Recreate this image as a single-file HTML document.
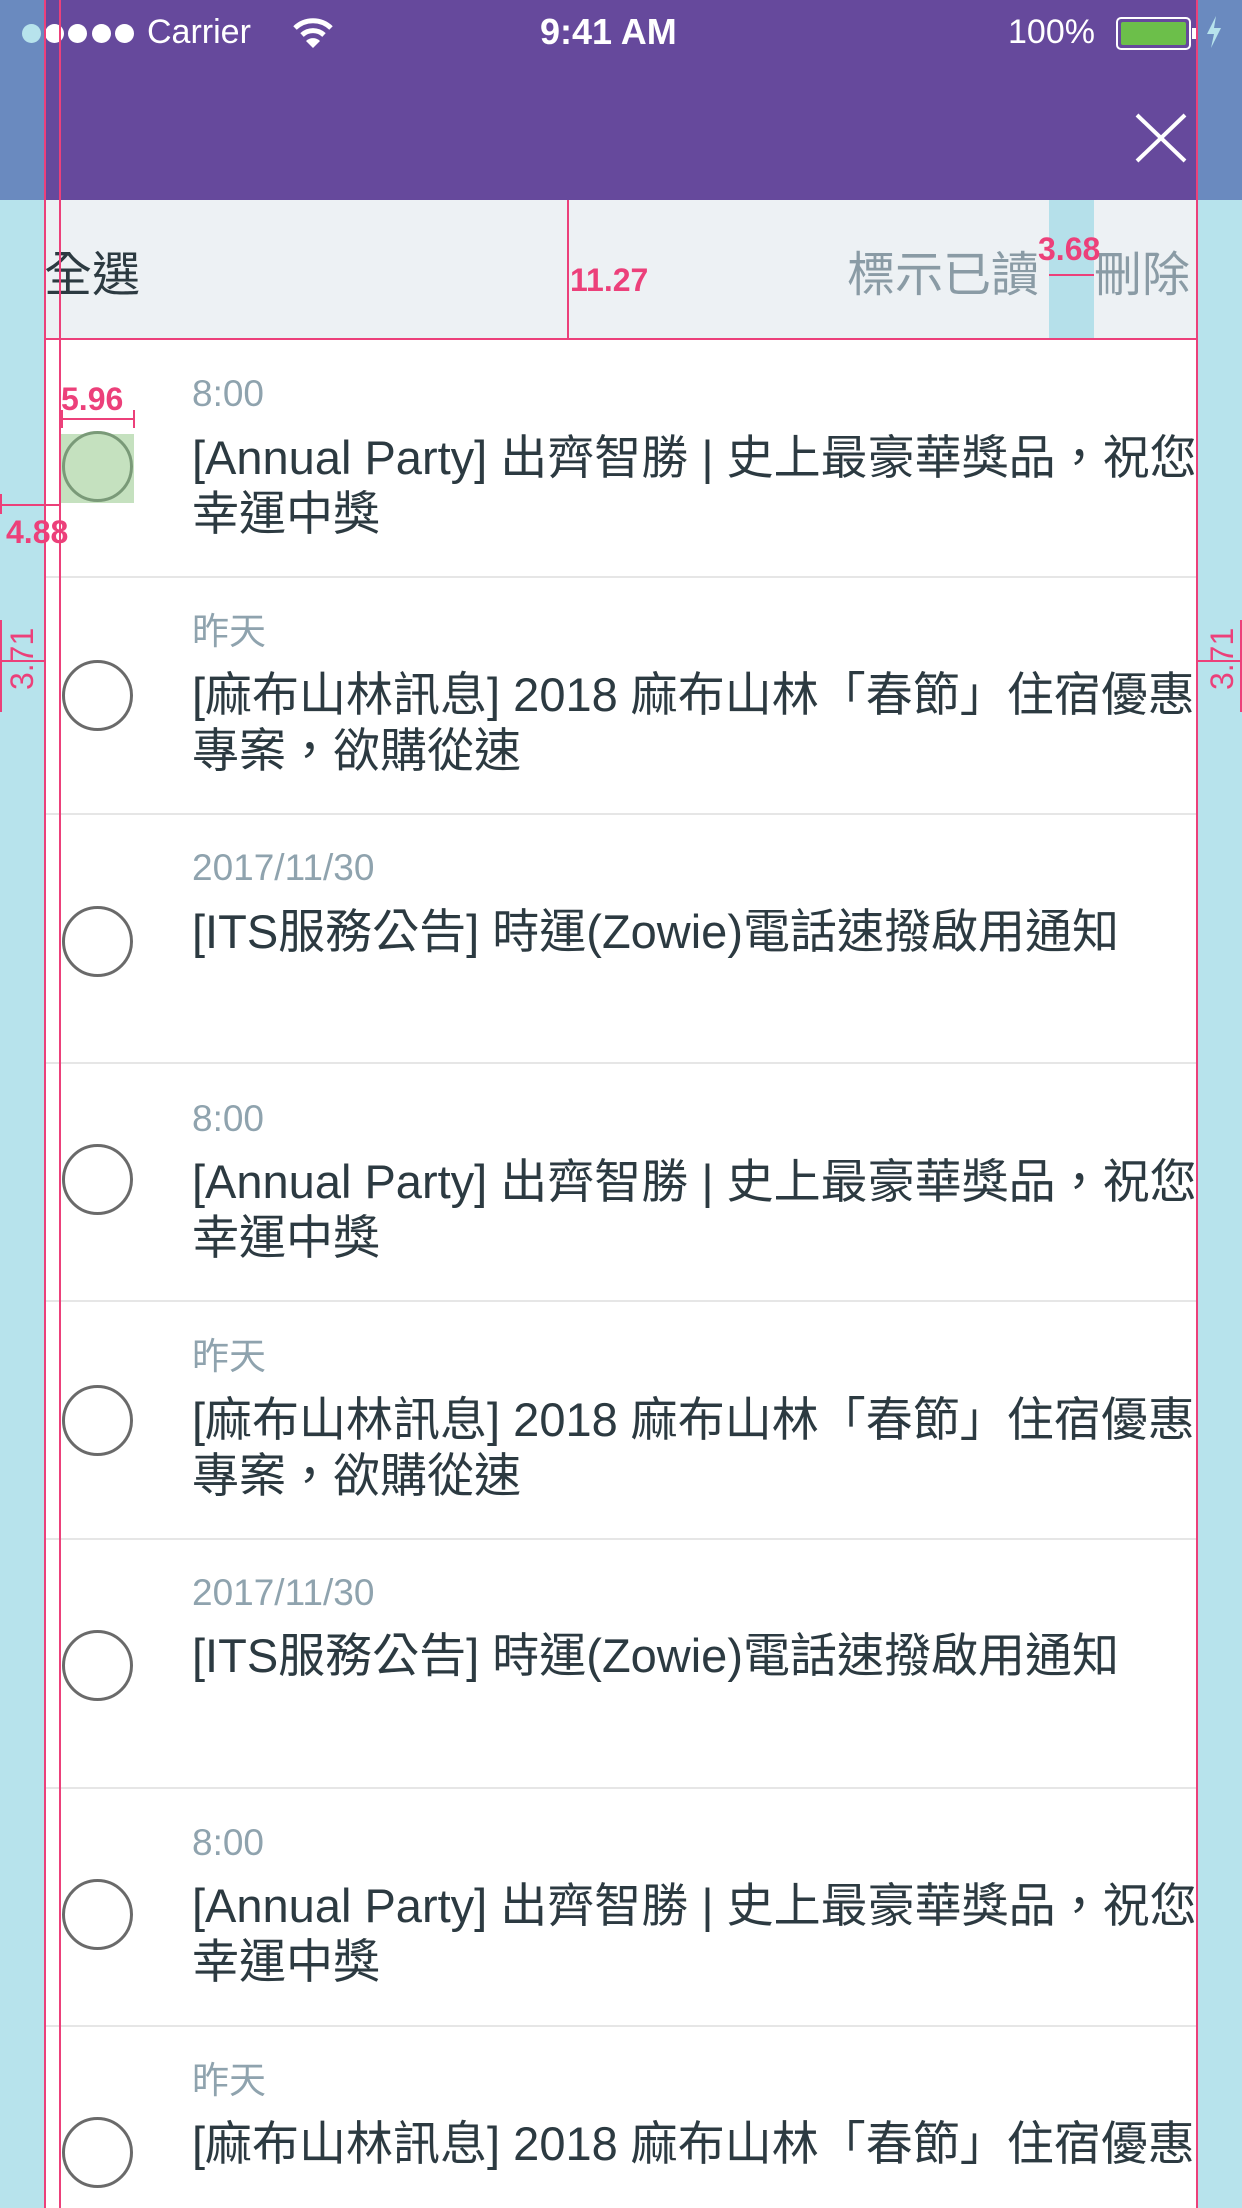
<!DOCTYPE html>
<html><head><meta charset="utf-8">
<style>
*{margin:0;padding:0;box-sizing:border-box}
body{width:1242px;height:2208px;position:relative;overflow:hidden;background:#fff;font-family:"Liberation Sans","Noto Sans CJK TC",sans-serif}
.a{position:absolute}
.sb{color:#fff;font-size:34px;line-height:34px;top:15px}
.dot{position:absolute;width:19px;height:19px;border-radius:50%;background:#fff;top:24px}
.time{position:absolute;left:192px;color:#8fa3ae;font-size:37px;line-height:40px}
.msg{position:absolute;left:192px;width:1010px;color:#2c3a41;font-size:47px;line-height:56px;white-space:nowrap}
.circ{position:absolute;left:62px;width:71px;height:71px;border:3px solid #6a6a6a;border-radius:50%}
.sep{position:absolute;left:44px;width:1153px;height:2px;background:#e6e6e6}
.pk{color:#ec407a;font-weight:bold;font-size:32px;line-height:32px;position:absolute}
</style></head><body>
<div class="a" style="left:0;top:0;width:44px;height:2208px;background:#b7e3ec"></div>
<div class="a" style="left:1197px;top:0;width:45px;height:2208px;background:#b7e3ec"></div>
<div class="a" style="left:0;top:0;width:44px;height:200px;background:#6a8abf"></div>
<div class="a" style="left:1197px;top:0;width:45px;height:200px;background:#6a8abf"></div>
<div class="a" style="left:44px;top:0;width:1153px;height:200px;background:#66499c"></div>
<div class="dot" style="left:22px;background:#b7e3ec"></div>
<div class="dot" style="left:45px"></div><div class="dot" style="left:68px"></div><div class="dot" style="left:92px"></div><div class="dot" style="left:115px"></div>
<div class="a sb" style="left:147px">Carrier</div>
<svg class="a" style="left:292px;top:16px" width="42" height="34" viewBox="0 0 42 34"><path d="M3 12 A26 26 0 0 1 39 12" stroke="#fff" stroke-width="5" fill="none"/><path d="M10 19 A16 16 0 0 1 32 19" stroke="#fff" stroke-width="5" fill="none"/><path d="M14 25 L21 32 L28 25 A10 10 0 0 0 14 25Z" fill="#fff"/></svg>
<div class="a sb" style="left:540px;font-weight:bold;font-size:36px">9:41 AM</div>
<div class="a sb" style="left:1008px">100%</div>
<div class="a" style="left:1116px;top:17px;width:75px;height:33px;border:2px solid #fff;border-radius:5px;padding:3px"><div style="width:100%;height:100%;background:#6cbf4a;border-radius:2px"></div></div>
<div class="a" style="left:1192px;top:28px;width:4px;height:11px;background:#fff"></div>
<svg class="a" style="left:1205px;top:16px" width="18" height="32" viewBox="0 0 18 32"><path d="M11 0 L2 18 L9 18 L6 32 L16 12 L9 12 Z" fill="#b7e3ec"/></svg>
<svg class="a" style="left:1135px;top:113px" width="52" height="50" viewBox="0 0 52 50"><path d="M2 2 L50 48 M50 2 L2 48" stroke="#fff" stroke-width="4"/></svg>
<div class="a" style="left:44px;top:200px;width:1153px;height:139px;background:#edf1f4"></div>
<div class="a" style="left:1049px;top:200px;width:45px;height:139px;background:#b5e0ea"></div>
<div class="a" style="left:44px;top:249px;font-size:48px;line-height:54px;color:#2c3a41">全選</div>
<div class="a" style="left:847px;top:249px;font-size:48px;line-height:54px;color:#8a9ba5">標示已讀</div>
<div class="a" style="left:1094px;top:249px;font-size:48px;line-height:54px;color:#8a9ba5">刪除</div>
<div class="a" style="left:44px;top:338px;width:1153px;height:2px;background:#ec407a"></div>
<div class="a" style="left:567px;top:200px;width:2px;height:139px;background:#ec407a"></div>
<div class="pk" style="left:570px;top:264px">11.27</div>
<div class="pk" style="left:1038px;top:233px">3.68</div>
<div class="a" style="left:1049px;top:274px;width:45px;height:2px;background:#ec407a"></div>
<div class="sep" style="top:576px"></div>
<div class="sep" style="top:813px"></div>
<div class="sep" style="top:1062px"></div>
<div class="sep" style="top:1300px"></div>
<div class="sep" style="top:1538px"></div>
<div class="sep" style="top:1787px"></div>
<div class="sep" style="top:2025px"></div>

<div class="time" style="top:374px">8:00</div>
<div class="msg" style="top:430px">[Annual Party] 出齊智勝 | 史上最豪華獎品，祝您<br>幸運中獎</div>
<div class="a" style="left:61px;top:434px;width:73px;height:69px;background:#c5e1bf"></div>
<div class="circ" style="top:431px;border-color:#7a9a78"></div>

<div class="time" style="top:612px">昨天</div>
<div class="msg" style="top:667px">[麻布山林訊息] 2018 麻布山林「春節」住宿優惠<br>專案，欲購從速</div>
<div class="circ" style="top:660px"></div>

<div class="time" style="top:848px">2017/11/30</div>
<div class="msg" style="top:904px">[ITS服務公告] 時運(Zowie)電話速撥啟用通知</div>
<div class="circ" style="top:906px"></div>

<div class="time" style="top:1099px">8:00</div>
<div class="msg" style="top:1154px">[Annual Party] 出齊智勝 | 史上最豪華獎品，祝您<br>幸運中獎</div>
<div class="circ" style="top:1144px"></div>

<div class="time" style="top:1337px">昨天</div>
<div class="msg" style="top:1392px">[麻布山林訊息] 2018 麻布山林「春節」住宿優惠<br>專案，欲購從速</div>
<div class="circ" style="top:1385px"></div>

<div class="time" style="top:1573px">2017/11/30</div>
<div class="msg" style="top:1628px">[ITS服務公告] 時運(Zowie)電話速撥啟用通知</div>
<div class="circ" style="top:1630px"></div>

<div class="time" style="top:1823px">8:00</div>
<div class="msg" style="top:1878px">[Annual Party] 出齊智勝 | 史上最豪華獎品，祝您<br>幸運中獎</div>
<div class="circ" style="top:1879px"></div>

<div class="time" style="top:2061px">昨天</div>
<div class="msg" style="top:2116px">[麻布山林訊息] 2018 麻布山林「春節」住宿優惠</div>
<div class="circ" style="top:2117px"></div>

<div class="a" style="left:44px;top:0;width:2px;height:2208px;background:#ec407a"></div>
<div class="a" style="left:59px;top:0;width:2px;height:2208px;background:#ec407a"></div>
<div class="a" style="left:1196px;top:0;width:2px;height:2208px;background:#ec407a"></div>
<div class="pk" style="left:61px;top:383px">5.96</div>
<div class="a" style="left:61px;top:418px;width:74px;height:2px;background:#ec407a"></div>
<div class="a" style="left:61px;top:410px;width:2px;height:18px;background:#ec407a"></div>
<div class="a" style="left:133px;top:410px;width:2px;height:18px;background:#ec407a"></div>
<div class="a" style="left:0;top:504px;width:61px;height:2px;background:#ec407a"></div>
<div class="a" style="left:0;top:494px;width:2px;height:20px;background:#ec407a"></div>
<div class="pk" style="left:6px;top:516px">4.88</div>
<div class="a" style="left:0;top:620px;width:2px;height:92px;background:#ec407a"></div>
<div class="a" style="left:0;top:660px;width:44px;height:2px;background:#ec407a"></div>
<div class="pk" style="left:6px;top:690px;transform:rotate(-90deg);transform-origin:0 0;font-weight:normal">3.71</div>
<div class="a" style="left:1240px;top:620px;width:2px;height:92px;background:#ec407a"></div>
<div class="a" style="left:1198px;top:660px;width:44px;height:2px;background:#ec407a"></div>
<div class="pk" style="left:1206px;top:690px;transform:rotate(-90deg);transform-origin:0 0;font-weight:normal">3.71</div>
</body></html>
